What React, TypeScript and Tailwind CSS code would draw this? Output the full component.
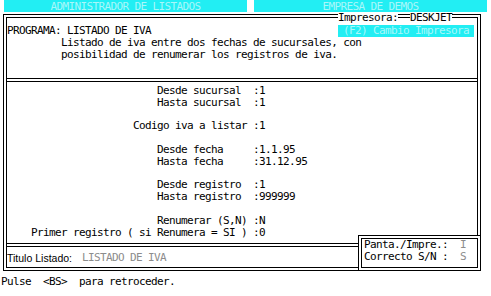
import React from "react";

const rows: [string, string][] = [
  ["                         Desde sucursal  ", ":1"],
  ["                         Hasta sucursal  ", ":1"],
  ["", ""],
  ["                     Codigo iva a listar ", ":1"],
  ["", ""],
  ["                         Desde fecha     ", ":1.1.95"],
  ["                         Hasta fecha     ", ":31.12.95"],
  ["", ""],
  ["                         Desde registro  ", ":1"],
  ["                         Hasta registro  ", ":999999"],
  ["", ""],
  ["                         Renumerar (S,N) ", ":N"],
  ["    Primer registro ( si Renumera = SI ) ", ":0"],
];

const App: React.FC = () => {
  return (
    <div className="relative w-[491px] h-[296px] overflow-hidden bg-white text-black font-['DejaVu_Sans_Mono',monospace] text-[11px] tracking-[-0.62px] leading-[12px]">
      {/* top title bars */}
      <div className="flex h-[12px]">
        <div className="ml-[4px] w-[243px] bg-[#22eef3] text-[#a9f7fa] flex items-center justify-center whitespace-pre leading-[11px]">
          ADMINISTRADOR DE LISTADOS
        </div>
        <div className="ml-[7px] w-[233px] bg-[#22eef3] text-[#a9f7fa] flex items-center justify-center whitespace-pre leading-[11px]">
          EMPRESA DE DEMOS
        </div>
      </div>

      {/* main frame */}
      <div className="relative mt-[2px] ml-[3px] w-[478px] border-4 border-double border-black">
        {/* header */}
        <div className="h-[64px] pt-[7px] border-b-4 border-double border-black">
          <div className="flex h-[12px] items-center justify-between">
            <span className="whitespace-pre">PROGRAMA: LISTADO DE IVA</span>
            <div className="mr-[3px] w-[136px] h-[12px] bg-[#22eef3] text-[#a9f7fa] flex items-center justify-center whitespace-pre">
              (F2) Cambio Impresora
            </div>
          </div>
          <div className="h-[12px] whitespace-pre">
            {"         Listado de iva entre dos fechas de sucursales, con"}
          </div>
          <div className="h-[12px] whitespace-pre">
            {"         posibilidad de renumerar los registros de iva."}
          </div>
        </div>

        {/* parameters */}
        <div className="h-[165px] pt-[3px] border-b-4 border-double border-black">
          {rows.map(([label, value], i) => (
            <div key={i} className="h-[11.8px] leading-[11.8px] whitespace-pre">
              {label}
              {value}
            </div>
          ))}
        </div>

        {/* title row */}
        <div className="h-[20px] pt-[2px] flex items-center">
          <span className="w-[75px] whitespace-pre font-['Liberation_Sans',sans-serif] text-[10.5px] tracking-normal">
            Titulo Listado:
          </span>
          <span className="whitespace-pre text-[#8c8c8c]">LISTADO DE IVA</span>
        </div>

        {/* printer label over the top border */}
        <span className="absolute top-[-5px] left-[331px] h-[9px] leading-[9px] bg-white whitespace-pre">Impresora:</span>
        <span className="absolute top-[-5px] left-[403px] h-[9px] leading-[9px] bg-white whitespace-pre">DESKJET</span>

        {/* screen/printer box */}
        <div className="absolute right-[-4px] bottom-[-4px] w-[123px] h-[36px] bg-white border-4 border-double border-black pl-[2px]">
          <div className="h-[12px] whitespace-pre">
            Panta./Impre.:  <span className="text-[#8c8c8c]">I</span>
          </div>
          <div className="h-[12px] whitespace-pre">
            Correcto S/N :  <span className="text-[#8c8c8c]">S</span>
          </div>
        </div>
      </div>

      {/* status line */}
      <div className="mt-[5px] pl-[1px] h-[12px] whitespace-pre">Pulse  &lt;BS&gt;  para retroceder.</div>
    </div>
  );
};

export default App;
